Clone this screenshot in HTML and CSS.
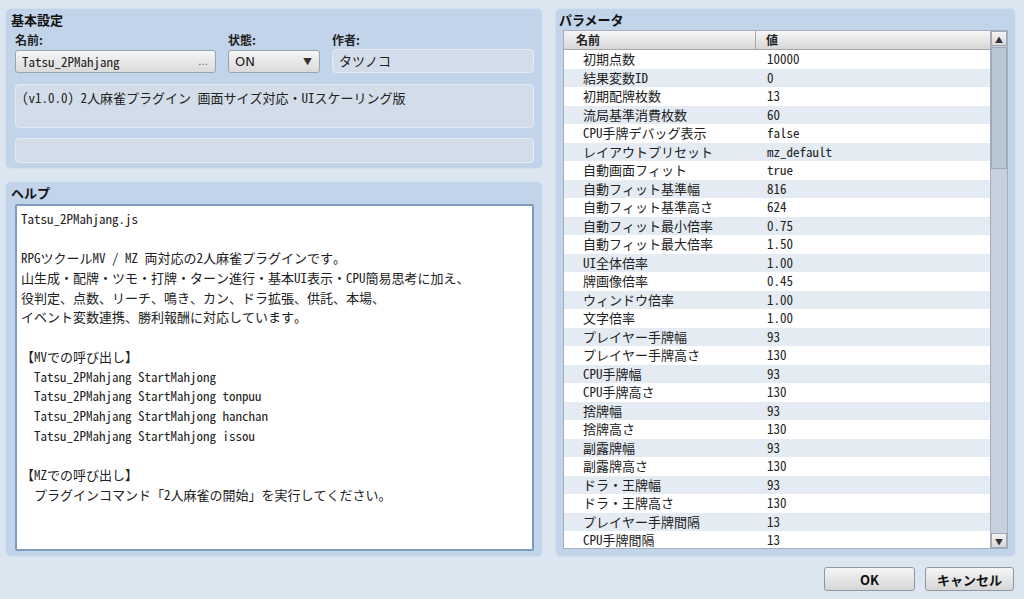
FILE: index.html
```html
<!DOCTYPE html>
<html lang="ja">
<head>
  <meta charset="UTF-8">
  <title>プラグイン</title>
  <link rel="stylesheet" href="styles.css">
</head>
<body>
  <div class="window">
    <div class="main">
      <div class="left">
        <section class="group basic">
          <h2 class="group-title">基本設定</h2>
          <div class="fields">
            <label class="lbl">名前:</label>
            <label class="lbl">状態:</label>
            <label class="lbl">作者:</label>
            <div class="picker"><span>Tatsu_2PMahjang</span><span class="dots">…</span></div>
            <div class="combo"><span>ON</span><span class="arrow">▼</span></div>
            <div class="box author">タツノコ</div>
          </div>
          <div class="box desc">(v1.0.0) 2人麻雀プラグイン 画面サイズ対応・UIスケーリング版</div>
          <div class="box empty"></div>
        </section>
        <section class="group help">
          <h2 class="group-title">ヘルプ</h2>
          <div class="helptext">
            <div class="line">Tatsu_2PMahjang.js</div>
            <div class="line"></div>
            <div class="line">RPGツクールMV / MZ 両対応の2人麻雀プラグインです。</div>
            <div class="line">山生成・配牌・ツモ・打牌・ターン進行・基本UI表示・CPU簡易思考に加え、</div>
            <div class="line">役判定、点数、リーチ、鳴き、カン、ドラ拡張、供託、本場、</div>
            <div class="line">イベント変数連携、勝利報酬に対応しています。</div>
            <div class="line"></div>
            <div class="line">【MVでの呼び出し】</div>
            <div class="line">  Tatsu_2PMahjang StartMahjong</div>
            <div class="line">  Tatsu_2PMahjang StartMahjong tonpuu</div>
            <div class="line">  Tatsu_2PMahjang StartMahjong hanchan</div>
            <div class="line">  Tatsu_2PMahjang StartMahjong issou</div>
            <div class="line"></div>
            <div class="line">【MZでの呼び出し】</div>
            <div class="line">  プラグインコマンド「2人麻雀の開始」を実行してください。</div>
          </div>
        </section>
      </div>
      <section class="group params">
        <h2 class="group-title">パラメータ</h2>
        <div class="table">
          <div class="list">
            <div class="head"><span class="c1">名前</span><span class="c2">値</span></div>
            <div class="row"><span class="c1">初期点数</span><span class="c2">10000</span></div>
            <div class="row"><span class="c1">結果変数ID</span><span class="c2">0</span></div>
            <div class="row"><span class="c1">初期配牌枚数</span><span class="c2">13</span></div>
            <div class="row"><span class="c1">流局基準消費枚数</span><span class="c2">60</span></div>
            <div class="row"><span class="c1">CPU手牌デバッグ表示</span><span class="c2">false</span></div>
            <div class="row"><span class="c1">レイアウトプリセット</span><span class="c2">mz_default</span></div>
            <div class="row"><span class="c1">自動画面フィット</span><span class="c2">true</span></div>
            <div class="row"><span class="c1">自動フィット基準幅</span><span class="c2">816</span></div>
            <div class="row"><span class="c1">自動フィット基準高さ</span><span class="c2">624</span></div>
            <div class="row"><span class="c1">自動フィット最小倍率</span><span class="c2">0.75</span></div>
            <div class="row"><span class="c1">自動フィット最大倍率</span><span class="c2">1.50</span></div>
            <div class="row"><span class="c1">UI全体倍率</span><span class="c2">1.00</span></div>
            <div class="row"><span class="c1">牌画像倍率</span><span class="c2">0.45</span></div>
            <div class="row"><span class="c1">ウィンドウ倍率</span><span class="c2">1.00</span></div>
            <div class="row"><span class="c1">文字倍率</span><span class="c2">1.00</span></div>
            <div class="row"><span class="c1">プレイヤー手牌幅</span><span class="c2">93</span></div>
            <div class="row"><span class="c1">プレイヤー手牌高さ</span><span class="c2">130</span></div>
            <div class="row"><span class="c1">CPU手牌幅</span><span class="c2">93</span></div>
            <div class="row"><span class="c1">CPU手牌高さ</span><span class="c2">130</span></div>
            <div class="row"><span class="c1">捨牌幅</span><span class="c2">93</span></div>
            <div class="row"><span class="c1">捨牌高さ</span><span class="c2">130</span></div>
            <div class="row"><span class="c1">副露牌幅</span><span class="c2">93</span></div>
            <div class="row"><span class="c1">副露牌高さ</span><span class="c2">130</span></div>
            <div class="row"><span class="c1">ドラ・王牌幅</span><span class="c2">93</span></div>
            <div class="row"><span class="c1">ドラ・王牌高さ</span><span class="c2">130</span></div>
            <div class="row"><span class="c1">プレイヤー手牌間隔</span><span class="c2">13</span></div>
            <div class="row"><span class="c1">CPU手牌間隔</span><span class="c2">13</span></div>
          </div>
          <div class="scrollbar">
            <div class="sb-btn">▲</div>
            <div class="sb-track"><div class="sb-thumb"></div></div>
            <div class="sb-btn">▼</div>
          </div>
        </div>
      </section>
    </div>
    <div class="buttons">
      <button class="btn ok">OK</button>
      <button class="btn cancel">キャンセル</button>
    </div>
  </div>
</body>
</html>
```

FILE: styles.css
```css
body {
  margin: 0;
  background: #dce6f1;
  font-family: "Noto Sans Mono CJK JP", "DejaVu Sans Mono", "Noto Sans CJK JP", monospace;
  font-size: 13px;
  color: #222;
}
.window {
  width: 1024px;
  height: 599px;
  padding: 8px 8px 0 5px;
  box-sizing: border-box;
}
.main {
  display: grid;
  grid-template-columns: 538px 1fr;
  column-gap: 12px;
  height: 549px;
}
.left {
  display: flex;
  flex-direction: column;
  gap: 12px;
}
.group {
  background: #c2d4e9;
  border: 1px solid #d3e0ee;
  border-radius: 6px;
  box-sizing: border-box;
  padding: 1px 8px 0 9px;
}
.group-title {
  margin: 0;
  font-family: "Noto Sans CJK JP", sans-serif;
  font-size: 13px;
  font-weight: bold;
  line-height: 20px;
  color: #111;
  margin-left: -4px;
}
.basic {
  height: 161px;
}
.fields {
  display: grid;
  grid-template-columns: 201px 92px 1fr;
  column-gap: 12px;
  margin-top: 2px;
}
.lbl {
  font-family: "Noto Sans CJK JP", sans-serif;
  font-weight: bold;
  font-size: 12px;
  line-height: 16px;
  margin-bottom: 2px;
}
.picker, .combo {
  height: 23px;
  box-sizing: border-box;
  border: 1px solid #9aa3ad;
  border-radius: 3px;
  background: linear-gradient(#f6f6f6, #dadada);
  display: flex;
  align-items: center;
  justify-content: space-between;
  padding: 0 7px 0 6px;
}
.dots {
  font-family: "DejaVu Sans", sans-serif;
  font-size: 10px;
  color: #555;
}
.combo span:first-child {
  font-family: "DejaVu Sans", sans-serif;
  font-size: 13px;
}
.arrow {
  font-size: 9px;
  color: #333;
}
.box {
  background: #d2dde9;
  border: 1px solid #e4ebf4;
  border-radius: 4px;
  box-sizing: border-box;
  padding: 0 6px;
}
.author {
  height: 24px;
  margin-top: -1px;
  line-height: 22px;
  font-family: "Noto Sans CJK JP", sans-serif;
}
.desc {
  margin-top: 11px;
  height: 44px;
  line-height: 26px;
}
.empty {
  margin-top: 10px;
  height: 25px;
}
.help {
  flex: 1;
}
.helptext {
  margin-top: 1px;
  height: 347px;
  box-sizing: border-box;
  background: #fff;
  border: 2px solid #7f9bbb;
  border-radius: 2px;
  padding: 3px 4px;
}
.line {
  height: 19.7px;
  line-height: 19.7px;
  white-space: pre;
  overflow: hidden;
}
.params {
  padding: 1px 7px 0 7px;
}
.table {
  display: flex;
  height: 517px;
  border: 1px solid #a3afbd;
  background: #fff;
}
.list {
  flex: 1;
}
.head {
  display: flex;
  height: 18px;
  line-height: 18px;
  background: linear-gradient(#f7f7f7, #d6d6d6);
  border-bottom: 1px solid #a8a8a8;
  font-family: "Noto Sans CJK JP", sans-serif;
  font-weight: bold;
  font-size: 12px;
}
.head .c1 {
  width: 192px;
  padding-left: 12px;
  border-right: 1px solid #a8a8a8;
  box-sizing: border-box;
}
.head .c2 {
  padding-left: 10px;
}
.row {
  display: flex;
  height: 18.5px;
  line-height: 18.5px;
}
.row:nth-child(odd) {
  background: #e4ebf3;
}
.row .c1 {
  width: 192px;
  padding-left: 19px;
  box-sizing: border-box;
}
.row .c2 {
  padding-left: 11px;
}
.scrollbar {
  width: 16px;
  display: flex;
  flex-direction: column;
  background: #c6d1dd;
  border-left: 1px solid #a3afbd;
}
.sb-btn {
  height: 15px;
  font-size: 8px;
  line-height: 15px;
  text-align: center;
  background: linear-gradient(#f3f3f3, #d8d8d8);
  border: 1px solid #9ea8b3;
  color: #333;
  box-sizing: border-box;
}
.sb-track {
  flex: 1;
  padding-top: 1px;
}
.sb-thumb {
  height: 122px;
  background: #b9c6d4;
  border: 1px solid #9aa9b9;
  box-sizing: border-box;
}
.buttons {
  display: flex;
  justify-content: flex-end;
  gap: 10px;
  margin-top: 10px;
  padding-right: 2px;
}
.btn {
  height: 24px;
  border: 1px solid #8f98a2;
  border-radius: 3px;
  background: linear-gradient(#f6f6f6, #d6d6d6);
  font-family: "Noto Sans CJK JP", sans-serif;
  font-weight: bold;
  font-size: 13px;
  color: #111;
  padding: 0;
}
.ok {
  width: 91px;
}
.cancel {
  width: 89px;
}
```
